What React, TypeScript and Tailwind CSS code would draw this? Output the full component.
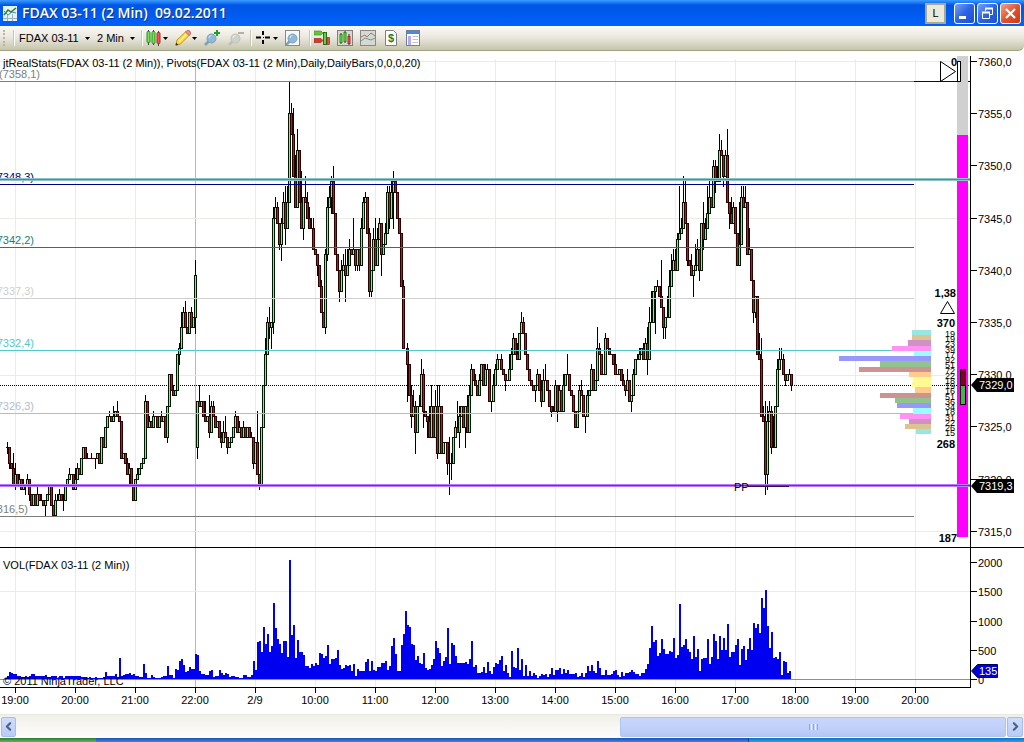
import React from 'react';
import { ChevronLeft, ChevronRight } from 'lucide-react';

const TICK = 5.22;

/* Candles: "close/high/low" in half-point ticks above 7315. A missing high or low
   means no wick on that side. Each bar opens at the previous close. */
interface CandleRun {
  x: number;
  open: number;
  bars: string;
}

const CANDLE_RUNS: CandleRun[] = [
  {
    x: 7,
    open: 16,
    bars: `16/17/15 13//12 12 9/15 11/13/8 9 10/11 8 9/10 9//7 10/11 7//6 5 7 5 7/9 6 6/7 5 6//3 7 9 5 3 6/7 6/7 7/8
      6/7 6/7/4 9 10 11/12 11 8 10/12 12/13 11 14 16 14/15 14/15 14 14/15 14 14//12 15 13 18 16 20 22 22/23 21 22/24
      23 22/25 21 14 15 13 11/14 12/13/9 9 6 10 11/12 12 13 14 25/26 20 21/22 20 22/23 22 20 22 21/23 22 18 24//17
      30 27 26/28 27 34 35/36/32 39/42 42/43 39/44 38 42 39/43 41 49/52/38`,
  },
  {
    x: 197,
    open: 16,
    bars: `25//14 24/28 25 22/25 21/25 22 19/26/18 24/25 22/25 20 21 18/20 17/19/16 19/21 18/22 16//15 17 18 20 22/23
      19 20/21 18 20/21 18 20 18 18/19 13//12 17 11/23 9//8 20 28 34/37 40/41 39/43/37 40//35 60/62/38 62/64 59/63
      55/58/54 59/60/52 63/65 58/66/55 63/66 80/86 76/82 68/81 62/72 73/77 63/73 58/69 64//56 63/68 60/65 58/62
      58/60 54/60 53 51//49 47 42/48 39 53/54/38 62/64/52 64/66 67/68/61 61/70 53 50/53 46//44 50/52 51/53 49/54/44
      51/54 54/56 53 54/60 51/54/50 54//50 51//50 58/60 63/64 64/65 57 46/58/45 50//45 56/58 51/60 56/58 59/60
      53//49 55 57/59 65/66 60/66/58 65/67 67/69/58 65/67 60 57 47 35/48`,
  },
  {
    x: 407,
    open: 35,
    bars: `32/36/25 26 22/28/20 24/27 19/25/15 24 24/26 30/33 23/31/20 22 21//18 18/24 24/28 18 24/27 15/28/14 24/28
      15/24 17 17 13//11 13/18/7 13/15/10 18 20/21 19/25 22/24/16 24 20 24//16 19/26 26/28 31/32 29 28/30 26 29/30
      32 28 31/32 31/32 25 25//23 28/30 31/32 33/34 33 31/34 30 29//27 29 31/34 34/35 37/38 34 33/36 38 40/42 38/41
      34 31 29 28 27 28//25 30/31 27 25/29/24 29/31 29/32 27 24 23//22 23/24 28/29 23//21 27/28 23 28/30 30 30/34
      27 26 23 20 23 27/28 26/29 22 22//19 26/27 27 31/32 27 29 35/39 34/36 30/33 30 37/38 35 34 34 32/34 30/34
      30 31 29 28/30 27//26 29/31 25 26//23 30/31 33 33/34 34/35 35 33/36 36/37 33/39/30 40/43`,
  },
  {
    x: 651,
    open: 40,
    bars: `40/46 46 47//38 47/48 45 43/52 39//37 41//37 41/45 47/50 50/53 52/54 50/54 56/57 57/66 58/60 63/68 59/67
      52//51 51 49/53 50//45 51/55 54/56 50//48 59 56/63/54 58/60 61/66 64/67 62 70/71 67/71/65 67/70 73/76 72/75
      68//66 72/73 63/77 61//58 59/64 62/63 57 51 55/63 64/66 62/66 63/66 53 54/58 48/54 42//40 45//41 34 33/38
      22/37 21/24 11/25/7 21/24/8 23/25 16/24/15 16/22 24 31/33 33/35 33/35 30/34 29//28 30 30/31 28/30/27`,
  },
];

/* Volume histogram, bar heights in pixels, one bar every two pixels */
const VOLUME_RUNS = [
  {
    x: 7,
    heights: `3 7 6 5 5 3 3 2 2 3 2 3 5 5 3 3 3 3 3 4 2 2 3 3 3 1 3 3 1 3 3 3 3 3 3 3 3 2 2 2 0 2 0 1 2 0 1 1 2 7 3 3 3 3 5
      2 21 3 4 5 5 6 4 5 3 3 2 2 15 6 0 0 4 2 1 1 1 2 3 3 13 4 4 1 10 9 18 20 14 7 8 12 10 10 25 24 8 5 5 4 4 8 9 2 3 3
      9 6 4 6 5 2 3 3 2 2 1 1 4 4 2 2 4 3`,
  },
  {
    x: 253,
    heights: `18 9 37 38 27 52 35 45 27 33 76 51 40 35 26 38 38 22 119 44 54 21 39 27 27 24 13 13 11 15 13 16 14 26 25 21
      23 34 15 20 20 21 29 14 10 11 14 13 14 8 15 3 10 8 8 8 17 20 8 18 9 8 12 12 16 16 18 9 13 33 41 25 8 8 34 45 68 54
      52 35 34 19 23 16 15 26 11 9 10 14 20 38 31 26 13 18 22 51 15 36 34 23 16 16 16 16 17 15 20 38 12 14 6 6 7 12 6 17
      8 5 12 16 15 19 23 8 14 6 2`,
  },
  {
    x: 511,
    heights: `28 12 11 31 9 20 3 14 3 8 3 6 4 1 3 5 4 5 2 5 11 4 9 9 11 5 10 6 9 5 5 5 6 2 3 6 2 6 13 8 14 8 6 18 11 4 4 9
      4 4 5 8 9 4 2 7 3 6 6 7 9 7 5 5 3 6 6 10 15 31 53 37 39 23 26 40 30 25 25 28 27 41 21 24 75 32 34 40 30 27 20 43
      22 30 8 20 21 21 40 15 22 45 38 20 43 29 41 29 55 22 27 27 34 40 14 30 33 19 30 41 29 56 51 55 46 81 71 89 53
      31 47 21 22 20 27 4 18 17 6 8`,
  },
];

const PIVOTS = [
  { label: '(7358,1)', y: 30, labelX: 40, color: '#7b7f7b' },
  { label: '(7348,3)', y: 133, labelX: 34, color: '#000080' },
  { label: '(7342,2)', y: 196, labelX: 34, color: '#12807c' },
  { label: '(7337,3)', y: 247, labelX: 34, color: '#cfcfcf' },
  { label: '(7332,4)', y: 299, labelX: 34, color: '#55c8c8' },
  { label: '(7326,3)', y: 362, labelX: 34, color: '#afbdd0' },
  { label: '(7316,5)', y: 465, labelX: 28, color: '#7b7f7b' },
];

const PROFILE: [number, string][] = [
  [19, '#99e5e0'],
  [19, '#dbc491'],
  [23, '#d092c4'],
  [39, '#ff93f4'],
  [17, '#98ffff'],
  [92, '#9898fb'],
  [51, '#92c28e'],
  [72, '#cd9393'],
  [22, '#ffcc8e'],
  [18, '#fffb92'],
  [19, '#fffb92'],
  [16, '#ffcc8e'],
  [51, '#cd9393'],
  [36, '#92c28e'],
  [34, '#9898fb'],
  [18, '#98ffff'],
  [31, '#ff93f4'],
  [22, '#d092c4'],
  [26, '#dbc491'],
  [15, '#99e5e0'],
];

const HOURS = [
  '19:00', '20:00', '21:00', '22:00', '2/9', '10:00', '11:00', '12:00',
  '13:00', '14:00', '15:00', '16:00', '17:00', '18:00', '19:00', '20:00',
];
const PRICES = [7360, 7355, 7350, 7345, 7340, 7335, 7330, 7325, 7320, 7315];
const hourX = (i: number) => 15 + i * 60;
const tickY = (t: number) => Math.round(480 - t * TICK);

const VerticalGrid = ({ from = 0 }: { from?: number }) => (
  <g shapeRendering="crispEdges">
    {HOURS.map((_, i) => (
      <rect key={i} x={hourX(i)} y={from} width={1} height="100%" fill={i === 3 ? '#b9b9b9' : '#ecebe4'} />
    ))}
  </g>
);

const Candles = () => (
  <g shapeRendering="crispEdges">
    {CANDLE_RUNS.map((run) => {
      let prev = run.open;
      return run.bars.trim().split(/\s+/).map((token, i) => {
        const [c, h, l] = token.split('/');
        const open = prev;
        const close = Number(c);
        prev = close;
        const up = close > open;
        const top = tickY(Math.max(open, close));
        const bottom = tickY(Math.min(open, close));
        const high = h ? Math.min(tickY(Number(h)), top) : top;
        const low = l ? Math.max(tickY(Number(l)), bottom) : bottom;
        const x = run.x + i * 2;
        return (
          <g key={`${run.x}-${i}`}>
            <rect x={x} y={high} width={1} height={low - high + 1} fill="#000" />
            <rect x={x - 1} y={top} width={3} height={bottom - top + 1} fill={up ? '#001c00' : '#300000'} />
            {bottom - top > 1 && (
              <rect x={x} y={top + 1} width={1} height={bottom - top - 1} fill={up ? '#9cdc9c' : '#c01818'} />
            )}
          </g>
        );
      });
    })}
  </g>
);

const PricePane = () => (
  <div className="flex border-b border-black">
    <svg className="h-[496px] min-w-0 flex-1 text-[11px]" role="img" aria-label="FDAX price chart">
      <VerticalGrid from={8} />
      <g shapeRendering="crispEdges" fill="#ecebe4">
        <rect y={10} width="100%" height={1} />
        <rect y={167} width="100%" height={1} />
        <rect y={324} width="100%" height={1} />
        <rect y={480} width="100%" height={1} />
      </g>
      <line x1={0} x2="100%" y1={334.5} y2={334.5} stroke="#000" strokeDasharray="1 1" shapeRendering="crispEdges" />
      <text x={3} y={16}>jtRealStats(FDAX 03-11 (2 Min)), Pivots(FDAX 03-11 (2 Min),Daily,DailyBars,0,0,0,20)</text>
      <Candles />
      {PIVOTS.map((p) => (
        <g key={p.label} fill={p.color}>
          <text x={p.labelX} y={p.y - 3} textAnchor="end">{p.label}</text>
          <rect y={p.y} width={914} height={1} shapeRendering="crispEdges" />
        </g>
      ))}

      {/* Order flow column, anchored to the price axis */}
      <svg x="100%" className="overflow-visible">
        <rect x={-56} y={30} width={56} height={1} fill="#000080" />
        {PROFILE.map(([size, color], i) => (
          <rect key={i} x={-39 - size} y={279 + Math.round(i * TICK)} width={size} height={Math.round((i + 1) * TICK) - Math.round(i * TICK)} fill={color} />
        ))}
        <g className="text-[9px]" textAnchor="end">
          {PROFILE.map(([size], i) => (
            <text key={i} x={-15} y={286 + Math.round(i * TICK)}>{size}</text>
          ))}
        </g>
        <rect x={-13} y={5} width={11} height={79} fill="#d0d0d0" />
        <rect x={-13} y={84} width={11} height={402} fill="#ff00ff" />
        <g stroke="#000">
          <path d="M-29.5 10.5v20l15-10z" fill="#fff" />
          <rect x={-12.5} y={10.5} width={3} height={20} fill="#fff" />
          <path d="M-29.5 262.5h14l-7-12z" fill="#fff" />
          <rect x={-9.5} y={318.5} width={5} height={16} fill="#800020" />
          <rect x={-9.5} y={334.5} width={5} height={19} fill="#40b840" />
        </g>
        <g className="font-bold" textAnchor="end">
          <text x={-13} y={15}>0</text>
          <text x={-14} y={246}>1,38</text>
          <text x={-15} y={276}>370</text>
          <text x={-15} y={397}>268</text>
          <text x={-13} y={491}>187</text>
        </g>
      </svg>

      <g shapeRendering="crispEdges">
        <rect y={127} width="100%" height={3} fill="#8cc4c8" />
        <rect y={128} width="100%" height={1} fill="#4c9098" />
        <rect y={433} width="100%" height={3} fill="#b878ff" />
        <rect y={434} width="100%" height={1} fill="#7030b8" />
        <rect x={748} y={435} width={41} height={1} fill="#301050" />
      </g>
      <text x={734} y={440}>PP</text>
    </svg>
    <svg className="h-[496px] w-[54px] text-[11px]" aria-label="Price axis">
      <rect y={5} width={1} height={491} />
      {PRICES.map((price, i) => (
        <g key={price}>
          <rect y={10 + Math.round(i * TICK * 10)} width={7} height={1} />
          <text x={8} y={15 + Math.round(i * TICK * 10)}>{price},0</text>
        </g>
      ))}
      <path d="M1 334l6-7h37v14H7z" />
      <path d="M1 435l6-7h37v14H7z" />
      <text x={9} y={338} className="fill-white">7329,0</text>
      <text x={9} y={439} className="fill-white">7319,3</text>
    </svg>
  </div>
);

const VolumePane = () => (
  <div className="flex">
    <svg className="h-[140px] min-w-0 flex-1 border-b border-black text-[11px]" role="img" aria-label="Volume chart">
      <VerticalGrid />
      <rect y={43} width="100%" height={1} fill="#ecebe4" />
      <g fill="#0000f0" shapeRendering="crispEdges">
        {VOLUME_RUNS.map((run) =>
          run.heights.trim().split(/\s+/).map((h, i) => (
            <rect key={`${run.x}-${i}`} x={run.x + i * 2} y={131 - Number(h)} width={2} height={Number(h)} />
          ))
        )}
      </g>
      <rect y={131} width="100%" height={1} fill="#909090" />
      <rect x={5} y={130} width={785} height={1} fill="#0000f0" />
      <text x={3} y={21}>VOL(FDAX 03-11 (2 Min))</text>
      <text x={3} y={137}>© 2011 NinjaTrader, LLC</text>
    </svg>
    <svg className="h-[140px] w-[54px] text-[11px]" aria-label="Volume axis">
      <rect width={1} height={140} />
      {[2000, 1500, 1000, 500, 0].map((v) => {
        const y = Math.round(131 - v * 0.0585);
        return (
          <g key={v}>
            <rect y={y} width={7} height={1} />
            <text x={8} y={y + 5}>{v}</text>
          </g>
        );
      })}
      <path d="M1.5 123l6-6.5h20v13h-20z" fill="#0000d8" stroke="#000050" />
      <text x={9} y={127} className="fill-white">135</text>
    </svg>
  </div>
);

const TimeAxis = () => (
  <svg className="h-[26px] w-full text-[11px]" aria-label="Time axis">
    {HOURS.map((label, i) => (
      <g key={i}>
        <rect x={hourX(i)} y={0} width={1} height={5} />
        <text x={hourX(i)} y={16} textAnchor="middle">{label}</text>
      </g>
    ))}
  </svg>
);

const Caret = () => (
  <svg width="5" height="3" viewBox="0 0 5 3"><path d="M0 0h5L2.5 3z" /></svg>
);

const Separator = () => <div className="mr-1 h-4 w-px bg-[#c8c6b4] shadow-[1px_0_0_#fff]" />;

const Icon = ({ children }: { children: React.ReactNode }) => (
  <svg width="16" height="16" viewBox="0 0 16 16" className="shrink-0">{children}</svg>
);

const CandleIcon = () => (
  <Icon>
    <path d="M2.5 0v15M7.5 0v15M12.5 1v15" stroke="#444" />
    <rect x="1" y="1.5" width="3" height="11" rx="1" fill="#6ee850" stroke="#2c8a20" />
    <rect x="6" y="1.5" width="3" height="12" rx="1" fill="#6ee850" stroke="#2c8a20" />
    <rect x="11" y="2.5" width="3" height="11" rx="1" fill="#f05850" stroke="#a03028" />
  </Icon>
);

const Lens = ({ fill = '#8fb9d6', rim = '#7ba0bc' }: { fill?: string; rim?: string }) => (
  <>
    <path d="M5 11l-4 4" stroke={rim} strokeWidth="2.5" />
    <circle cx="7.5" cy="8.5" r="4.5" fill={fill} stroke={rim} />
    <path d="M5 8a2.5 2.5 0 0 1 2.5-2.5" stroke="#fff" fill="none" opacity=".7" />
  </>
);

const Toolbar = () => (
  <div className="flex h-[25px] items-center rounded-br-md border-b border-[#a3a483] bg-linear-to-b from-[#fbfaf6] via-[#e9e7dc] to-[#c5c4aa] pl-[3px] text-[11px]">
    <div className="mr-[6px] h-4 w-[4px] border-l-2 border-dotted border-[#b8b6a0]" />
    <Separator />
    <button className="flex h-5 w-[78px] items-center gap-[6px] whitespace-nowrap pl-px">FDAX 03-11 <Caret /></button>
    <button className="flex h-5 w-[45px] items-center gap-[6px] whitespace-nowrap pl-px">2 Min <Caret /></button>
    <Separator />
    <button aria-label="Chart style" className="flex h-5 w-[29px] items-center gap-px">
      <CandleIcon /><Caret />
    </button>
    <button aria-label="Drawing tools" className="flex h-5 w-[29px] items-center gap-px">
      <Icon>
        <path d="M1 15l1-5L11 1.500l3.500 3.500L5.500 14z" fill="#fbdc44" stroke="#c09420" />
        <path d="M10.500 2l1.500-1.500q2-.5 3 .8t.5 2.700L14 5.500z" fill="#f08c8c" stroke="#b85858" strokeWidth=".8" />
        <path d="M.5 15.500l.6-3 2.400 2.400z" fill="#333" />
        <path d="M4 11.500l7.500-7.500" stroke="#fff3a0" strokeWidth="1.500" />
      </Icon>
      <Caret />
    </button>
    <button aria-label="Zoom in" className="h-5 w-6">
      <Icon><Lens /><path d="M13 0v6M10 3h6" stroke="#18a030" strokeWidth="2" /></Icon>
    </button>
    <button aria-label="Zoom out" className="h-5 w-[22px]" disabled>
      <Icon><Lens fill="#d0d0cc" rim="#c0c0b8" /><path d="M10 3h6" stroke="#b0b0a8" strokeWidth="2" /></Icon>
    </button>
    <Separator />
    <button aria-label="Crosshair" className="flex h-5 w-[30px] items-center gap-px pl-px">
      <Icon><path d="M7 1v4M7 10v4M0 7.500h5M9 7.500h5" stroke="#000" strokeWidth="2" /><path d="M7 7h1v1H7z" /></Icon>
      <Caret />
    </button>
    <button aria-label="Zoom frame" className="h-5 w-6">
      <Icon><rect x=".5" y=".5" width="14" height="15" fill="#f8f8f8" stroke="#888" /><Lens /></Icon>
    </button>
    <Separator />
    <button aria-label="Chart trader" className="h-5 w-[23px]">
      <Icon>
        <path d="M0 1h7l2 2-2 2H0z" fill="#60c838" stroke="#388818" strokeWidth=".6" />
        <path d="M0 8.500h7l2 2-2 2H0z" fill="#d83830" stroke="#902018" strokeWidth=".6" />
        <path d="M9 3h2M9 10.500h2" stroke="#444" />
        <rect x="9.5" y="2.5" width="3" height="12" fill="#60d040" stroke="#287018" />
        <rect x="13" y="7.5" width="2.5" height="7" fill="#e05048" stroke="#902018" strokeWidth=".6" />
      </Icon>
    </button>
    <button aria-label="Data series" className="h-5 w-[23px]">
      <Icon>
        <rect x=".5" y=".5" width="15" height="15" fill="#d8d8d0" stroke="#808080" />
        <path d="M4 3v11M8 1v12M12 4v11" stroke="#333" />
        <rect x="3" y="4.5" width="2" height="8" fill="#6ee850" stroke="#2c8a20" />
        <rect x="7" y="2.5" width="2" height="9" fill="#6ee850" stroke="#2c8a20" />
        <rect x="11" y="6.5" width="2" height="7" fill="#f05850" stroke="#a03028" />
      </Icon>
    </button>
    <button aria-label="Indicators" className="h-5 w-6">
      <Icon>
        <rect x=".5" y=".5" width="15" height="15" fill="#d6d8d4" stroke="#888" />
        <path d="M1 7l4-2 2 2 4-4 4 3" fill="none" stroke="#c06868" />
        <path d="M1 11l4-3 3 1 3 1 4-2" fill="none" stroke="#60a088" />
      </Icon>
    </button>
    <button aria-label="Strategies" className="h-5 w-[22px]">
      <Icon>
        <path d="M1.500.5h8l3 3v12h-11z" fill="#fff" stroke="#808080" />
        <text x="4" y="12" className="fill-[#188028] text-[11px] font-bold">$</text>
      </Icon>
    </button>
    <button aria-label="Properties" className="h-5 w-[22px]">
      <Icon>
        <rect x=".5" y=".5" width="13" height="15" fill="#fff" stroke="#6880a8" />
        <path d="M1 1h12v3H1z" fill="#5088d8" />
        <path d="M2 6h3v9H2z" fill="#b8a8f0" />
        <path d="M6.500 6.500H12M6.500 9.500H12M6.500 12.500H12" stroke="#b8c4dc" />
      </Icon>
    </button>
  </div>
);

const TitleBar = () => (
  <header className="flex h-[26px] items-center bg-linear-to-b from-[#3b9cff] via-[#0055e5] via-20% to-[#0062fb] pr-[3px] pl-[3px]">
    <svg width="14" height="15" viewBox="0 0 14 15">
      <path d="M0 0h14v15H0z" fill="#e8f0ec" />
      <path d="M0 12.500h14M4.500 8v7M9.500 8v7" stroke="#98b0c8" />
      <path d="M1 9l4-5 3 2 5-4" fill="none" stroke="#208038" strokeWidth="1.5" />
      <path d="M1 5l4 4 4-3 4 1" fill="none" stroke="#5080b0" />
    </svg>
    <h1 className="ml-[5px] flex-1 truncate whitespace-pre font-['Open_Sans',sans-serif] text-[14px] leading-[20px] font-semibold text-white [text-shadow:1px_1px_0_#0a318c]">
      FDAX 03-11 (2 Min)  09.02.2011
    </h1>
    <button className="mr-2 h-[21px] w-[21px] border-2 border-[#a9a797] bg-[#ece9d8] text-[11px]">L</button>
    <div className="flex gap-[2px]">
      <button aria-label="Minimize" className="h-[21px] w-[21px] rounded-[3px] border border-white bg-linear-to-br from-[#7ba0f4] via-[#2c62e4] to-[#1c50d0]">
        <svg width="19" height="19"><path d="M4 12h7v3H4z" fill="#fff" /></svg>
      </button>
      <button aria-label="Restore" className="h-[21px] w-[21px] rounded-[3px] border border-white bg-linear-to-br from-[#7ba0f4] via-[#2c62e4] to-[#1c50d0]">
        <svg width="19" height="19" fill="none" stroke="#fff">
          <path d="M7.500 7V4.500h7v6H12" />
          <path d="M7 4.500h8" strokeWidth="2" />
          <path d="M4.500 8.500h7v6h-7z" />
          <path d="M4 8.500h8" strokeWidth="2" />
        </svg>
      </button>
      <button aria-label="Close" className="h-[21px] w-[21px] rounded-[3px] border border-white bg-linear-to-br from-[#f0a088] via-[#e2532c] to-[#c83a10]">
        <svg width="19" height="19"><path d="M5 5l9 9M14 5l-9 9" stroke="#fff" strokeWidth="2.2" /></svg>
      </button>
    </div>
  </header>
);

const ScrollBar = () => (
  <div className="flex h-6 items-center gap-px border-t border-[#e8e8e0] bg-linear-to-b from-[#f1f0ea] to-[#fdfdfa] px-px">
    <button aria-label="Scroll left" className="flex h-5 w-[15px] items-center justify-center rounded-xs border border-[#a8bce8] bg-linear-to-b from-[#d0dcfc] to-[#b8ccf8] text-[#4d6185]">
      <ChevronLeft size={13} strokeWidth={4} className="shrink-0" />
    </button>
    <div className="flex h-5 flex-1 justify-end">
      <div className="flex w-[39%] items-center justify-center gap-px rounded-xs border border-[#b0c4f0] bg-linear-to-b from-[#c8d6fb] via-[#c2d1fb] to-[#b4c8f4]">
        <span className="h-[6px] w-px bg-[#8ca8e8]" />
        <span className="h-[6px] w-px bg-[#eef4fe]" />
        <span className="h-[6px] w-px bg-[#8ca8e8]" />
        <span className="h-[6px] w-px bg-[#eef4fe]" />
        <span className="h-[6px] w-px bg-[#8ca8e8]" />
      </div>
    </div>
    <button aria-label="Scroll right" className="flex h-5 w-4 items-center justify-center rounded-xs border border-[#a8bce8] bg-linear-to-b from-[#d0dcfc] to-[#b8ccf8] text-[#4d6185]">
      <ChevronRight size={13} strokeWidth={4} className="shrink-0" />
    </button>
  </div>
);

export default function App() {
  return (
    <div className="flex flex-col bg-white font-['Liberation_Sans',Arial,sans-serif] text-black">
      <TitleBar />
      <Toolbar />
      <main>
        <PricePane />
        <VolumePane />
        <TimeAxis />
      </main>
      <ScrollBar />
      {/* Top edge of the taskbar */}
      <footer className="flex h-1">
        <div className="w-24 bg-linear-to-b from-[#2f7a35] to-[#5cb85c]" />
        <div className="flex-1 bg-linear-to-b from-[#1c50b8] to-[#3a85ee]" />
        <div className="w-[27%] border-l border-[#0c4890] bg-linear-to-b from-[#1272c0] to-[#18a8f4]" />
      </footer>
    </div>
  );
}
